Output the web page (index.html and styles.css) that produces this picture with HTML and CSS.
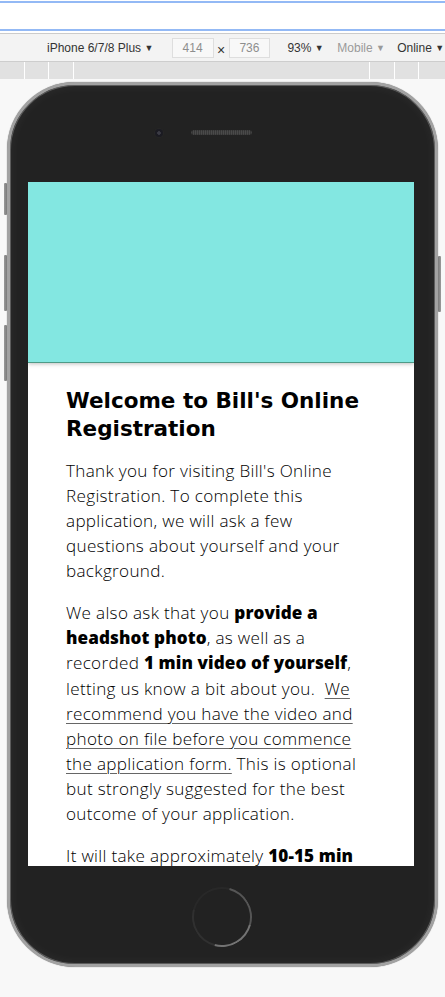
FILE: index.html
```html
<!DOCTYPE html>
<html lang="en">
<head>
<meta charset="utf-8">
<title>Bill's Online Registration</title>
<link rel="stylesheet" href="styles.css">
</head>
<body>
<div class="chrome">
  <div class="focus-line"></div>
  <div class="chrome-space"></div>
  <div class="focus-line"></div>
</div>
<div class="toolbar">
  <span class="device">iPhone 6/7/8 Plus <span class="caret">▼</span></span>
  <span class="dim">414</span>
  <span class="times">×</span>
  <span class="dim">736</span>
  <span class="zoom">93% <span class="caret">▼</span></span>
  <span class="mode">Mobile <span class="caret">▼</span></span>
  <span class="net">Online <span class="caret">▼</span></span>
</div>
<div class="media-strip">
  <div></div><div></div><div></div><div></div><div></div><div></div><div></div>
</div>
<div class="stage">
  <div class="phone">
    <span class="side-btn btn-mute"></span>
    <span class="side-btn btn-vol-up"></span>
    <span class="side-btn btn-vol-down"></span>
    <span class="side-btn btn-power"></span>
    <div class="bezel-top">
      <div class="camera-cell"><span class="camera"></span></div>
      <span class="speaker"></span>
      <div></div>
    </div>
    <div class="screen">
      <header class="hero"></header>
      <main class="content">
        <h1>Welcome to Bill's Online Registration</h1>
        <p>Thank you for visiting Bill's Online Registration. To complete this application, we will ask a few questions about yourself and your background.</p>
        <p>We also ask that you <strong>provide a headshot photo</strong>, as well as a recorded <strong>1 min video of yourself</strong>, letting us know a bit about you.&nbsp; <u>We recommend you have the video and photo on file before you commence the application form.</u> This is optional but strongly suggested for the best outcome of your application.</p>
        <p>It will take approximately <strong>10-15 min</strong> to complete the application form.</p>
      </main>
    </div>
    <div class="bezel-bottom">
      <span class="home"></span>
    </div>
  </div>
</div>
</body>
</html>
```
FILE: styles.css
```css
html, body {
  margin: 0;
  padding: 0;
}
body {
  background: #f8f8f8;
  font-family: "Liberation Sans", Arial, sans-serif;
  width: 445px;
  height: 997px;
  overflow: hidden;
}

/* top chrome */
.chrome {
  height: 33px;
  background: #fff;
  border-bottom: 1px solid #cbcbcb;
  display: flex;
  flex-direction: column;
}
.chrome::before {
  content: "";
  height: 1px;
}
.focus-line {
  height: 2px;
  background: #93b9f5;
}
.chrome-space {
  height: 26px;
}

.toolbar {
  height: 27px;
  background: #f3f3f3;
  border-bottom: 1px solid #cdcdcd;
  display: flex;
  align-items: center;
  padding-left: 47px;
  font-size: 12px;
  color: #333;
  white-space: nowrap;
}
.caret {
  font-size: 9px;
  position: relative;
  top: -1px;
}
.device {
  width: 125px;
}
.dim {
  width: 42px;
  height: 20px;
  box-sizing: border-box;
  border: 1px solid #dedede;
  background: #f8f8f8;
  color: #8e8e8e;
  display: flex;
  align-items: center;
  justify-content: center;
}
.times {
  width: 15px;
  text-align: center;
  font-size: 14px;
  position: relative;
  top: 2px;
}
.zoom {
  margin-left: 17px;
  width: 50px;
}
.mode {
  width: 60px;
  color: #9a9a9a;
}
.net {
  width: 48px;
}

.media-strip {
  height: 17px;
  display: grid;
  grid-template-columns: 24px 23px 24px 1fr 24px 23px 26px;
  column-gap: 1px;
  background: #fff;
}
.media-strip div {
  background: #e1e1e1;
}

/* device */
.stage {
  padding: 3px 0 0 7px;
}
.phone {
  position: relative;
  width: 431px;
  box-sizing: border-box;
  border: 3px solid #a2a2a2;
  border-radius: 68px;
  background: #222;
  padding: 0 21px 0 18px;
  box-shadow: inset 0 0 0 1px #5c5c5c, inset 0 0 10px 3px rgba(255, 255, 255, 0.04), 0 0 1px #6f6f6f;
}
.side-btn {
  position: absolute;
  width: 3px;
  background: linear-gradient(90deg, #9a9a9a, #7a7a7a);
  border-radius: 1px;
}
.btn-mute { left: -6px; top: 98px; height: 32px; }
.btn-vol-up { left: -6px; top: 170px; height: 56px; }
.btn-vol-down { left: -6px; top: 240px; height: 56px; }
.btn-power { right: -6px; top: 171px; height: 56px; background: linear-gradient(90deg, #7a7a7a, #9a9a9a); }

.bezel-top {
  height: 97px;
  box-sizing: border-box;
  padding-top: 44px;
  display: grid;
  grid-template-columns: 1fr 61px 1fr;
  align-items: start;
}
.camera-cell {
  display: flex;
  justify-content: flex-end;
  padding-right: 28px;
}
.camera {
  width: 8px;
  height: 8px;
  border-radius: 50%;
  background: radial-gradient(circle at 50% 50%, #3b3b45 0 1.5px, #1b1b22 2px);
  box-shadow: 0 0 0 1px #262626;
}
.speaker {
  margin-top: 1px;
  height: 5px;
  border-radius: 3px;
  background: repeating-linear-gradient(90deg, #4a4a4a 0 1px, #383838 1px 2px);
  box-shadow: inset 0 0 1px #111;
}

.screen {
  height: 684px;
  background: #fff;
  overflow: hidden;
}
.hero {
  height: 180px;
  background: #83e7e1;
  box-shadow: 0 1px 0 #4f9a87, 0 2px 4px rgba(0, 0, 0, 0.25);
  position: relative;
}
.content {
  padding: 25px 42px 0 38px;
  font-family: "Open Sans", Lato, sans-serif;
  color: #000;
}
.content h1 {
  margin: 0;
  font-family: "DejaVu Sans", "Open Sans", sans-serif;
  font-size: 21.5px;
  line-height: 28px;
  font-weight: 700;
  letter-spacing: 0;
}
.content p {
  margin: 15px 0 16.8px;
  font-size: 17.1px;
  line-height: 25.1px;
  font-weight: 300;
  letter-spacing: 0.32px;
}
.content p + p {
  margin-top: 0;
}
.content strong {
  font-weight: 800;
  letter-spacing: 0.1px;
}
.content u {
  text-decoration: underline;
  text-decoration-color: #666;
  text-decoration-thickness: 1px;
  text-underline-offset: 3px;
}

.bezel-bottom {
  height: 98px;
  box-sizing: border-box;
  padding-top: 21px;
  display: flex;
  justify-content: center;
}
.home {
  width: 60px;
  height: 60px;
  box-sizing: border-box;
  border-radius: 50%;
  border: 2px solid;
  border-color: #282828 #555 #737373 #303030;
  transform: rotate(-30deg);
  margin-left: 2px;
}
```
